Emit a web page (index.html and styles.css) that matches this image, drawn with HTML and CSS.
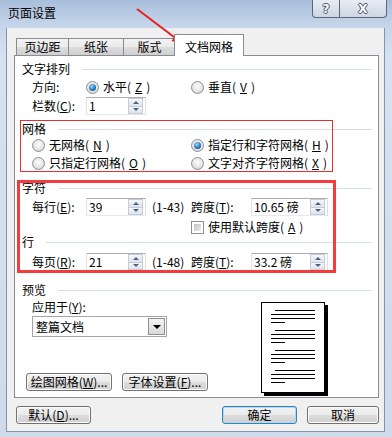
FILE: index.html
```html
<!DOCTYPE html>
<html lang="zh-CN">
<head>
  <meta charset="UTF-8" />
  <title>页面设置</title>
  <link rel="stylesheet" href="styles.css">
</head>
<body>
  <div class="window">
    <div class="titlebar">
      <span class="title">页面设置</span>
      <div class="caption">
        <span class="cap-btn help">?</span>
        <span class="cap-btn close">X</span>
      </div>
    </div>
    <div class="client">
      <div class="tabs">
        <div class="tab t1">页边距</div>
        <div class="tab t2">纸张</div>
        <div class="tab t3">版式</div>
        <div class="tab active">文档网格</div>
      </div>
      <div class="pane">
        <div class="heading">文字排列</div>
        <div class="row cols ind mt2">
          <div class="cell"><span class="lbl">方向:</span><span class="opt"><i class="radio on"></i>水平(<u>Z</u>)</span></div>
          <div class="cell"><span class="opt"><i class="radio"></i>垂直(<u>V</u>)</span></div>
        </div>
        <div class="row ind mt1">
          <span class="lbl">栏数(<u>C</u>):</span>
          <span class="spin"><span class="spin-val">1</span><span class="spin-btns"><i class="up"></i><i class="down"></i></span></span>
        </div>

        <div class="heading mt7">网格</div>
        <div class="row cols ind">
          <div class="cell"><span class="opt"><i class="radio"></i>无网格(<u>N</u>)</span></div>
          <div class="cell"><span class="opt"><i class="radio on"></i>指定行和字符网格(<u>H</u>)</span></div>
        </div>
        <div class="row cols ind">
          <div class="cell"><span class="opt"><i class="radio"></i>只指定行网格(<u>O</u>)</span></div>
          <div class="cell"><span class="opt"><i class="radio"></i>文字对齐字符网格(<u>X</u>)</span></div>
        </div>

        <div class="heading mt9">字符</div>
        <div class="row cols ind mt3">
          <div class="cell">
            <span class="lbl">每行(<u>E</u>):</span>
            <span class="spin"><span class="spin-val">39</span><span class="spin-btns"><i class="up"></i><i class="down"></i></span></span>
            <span class="range">(1-43)</span>
          </div>
          <div class="cell">
            <span class="lbl wide">跨度(<u>T</u>):</span>
            <span class="spin long"><span class="spin-val">10.65 磅</span><span class="spin-btns"><i class="up"></i><i class="down"></i></span></span>
          </div>
        </div>
        <div class="row short cols ind mt4">
          <div class="cell"></div>
          <div class="cell"><span class="opt"><i class="check"></i>使用默认跨度(<u>A</u>)</span></div>
        </div>

        <div class="heading mt1">行</div>
        <div class="row cols ind mt4">
          <div class="cell">
            <span class="lbl">每页(<u>R</u>):</span>
            <span class="spin"><span class="spin-val">21</span><span class="spin-btns"><i class="up"></i><i class="down"></i></span></span>
            <span class="range">(1-48)</span>
          </div>
          <div class="cell">
            <span class="lbl wide">跨度(<u>T</u>):</span>
            <span class="spin long"><span class="spin-val">33.2 磅</span><span class="spin-btns"><i class="up"></i><i class="down"></i></span></span>
          </div>
        </div>

        <div class="heading mt12">预览</div>
        <div class="preview">
          <div class="preview-left">
            <div class="apply">应用于(<u>Y</u>):</div>
            <div class="select"><span class="select-val">整篇文档</span><span class="select-btn"></span></div>
            <div class="btn-row">
              <button class="btn w86">绘图网格(<u>W</u>)...</button>
              <button class="btn w86">字体设置(<u>F</u>)...</button>
            </div>
          </div>
          <svg class="page" width="67" height="94" viewBox="0 0 67 94">
            <rect x="3" y="3" width="64" height="91" fill="#000"/>
            <rect x="0.5" y="0.5" width="63" height="90" fill="#fff" stroke="#000"/>
            <g stroke="#000" stroke-width="1">
              <path d="M14 8.5H54M10 12.5H54M10 16.5H54M10 20.5H24"/>
              <path d="M14 28.5H54M10 32.5H54M10 36.5H54M10 40.5H24"/>
              <path d="M14 48.5H54M10 52.5H54M10 56.5H54M10 60.5H24"/>
              <path d="M14 68.5H54M10 72.5H54M10 76.5H54M10 80.5H24"/>
            </g>
          </svg>
        </div>
      </div>
      <div class="footer">
        <button class="btn w75">默认(<u>D</u>)...</button>
        <button class="btn w75 default">确定</button>
        <button class="btn w72">取消</button>
      </div>
    </div>

    <div class="mark box1"></div>
    <div class="mark box2"></div>
    <svg class="arrow" width="200" height="60" viewBox="0 0 200 60">
      <line x1="137" y1="9" x2="176" y2="38.5" stroke="#e81f1f" stroke-width="2"/>
      <polygon points="183,44 171.5,41 177,33.5" fill="#e81f1f"/>
    </svg>
  </div>
</body>
</html>
```

FILE: styles.css
```css
* {
  box-sizing: border-box;
}
body {
  margin: 0;
  font-family: "Noto Sans CJK SC", sans-serif;
  font-size: 12px;
  line-height: 14px;
  color: #000;
}
.window {
  position: relative;
  width: 392px;
  height: 437px;
  overflow: hidden;
  background: linear-gradient(180deg, #a9bedb 0, #c6d6ea 26px, #d6e2f0 60px, #cfdbea 100%);
}
.titlebar {
  height: 28px;
  display: flex;
  align-items: flex-start;
  padding-left: 8px;
}
.title {
  margin-top: 6px;
}
.caption {
  display: flex;
  margin-left: auto;
  margin-right: 5px;
}
.cap-btn {
  height: 18px;
  display: flex;
  align-items: center;
  justify-content: center;
  border: 1px solid #5b6779;
  border-top: none;
  background: linear-gradient(#e7edf5, #cdd6e2);
  color: #fff;
  font-family: "DejaVu Sans", sans-serif;
  font-weight: bold;
  font-size: 12px;
  text-shadow: -1px 0 #4a5466, 1px 0 #4a5466, 0 -1px #4a5466, 0 1px #4a5466;
}
.help {
  width: 28px;
  border-radius: 0 0 0 4px;
}
.close {
  width: 47px;
  border-left: none;
  border-radius: 0 0 4px 0;
}

.client {
  margin-left: 6px;
  width: 379px;
  height: 404px;
  border: 1px solid #8394ab;
  border-top: none;
  background: #f0f0f0;
  padding-top: 6px;
}
.tabs {
  display: flex;
  align-items: flex-end;
  height: 21px;
  margin-left: 9px;
}
.tab {
  height: 17px;
  margin-right: -1px;
  display: flex;
  align-items: center;
  justify-content: center;
  border: 1px solid #898c95;
  border-bottom: none;
  background: linear-gradient(#f3f3f3, #ebebeb 50%, #dddddd 51%, #cfcfcf);
}
.t1 { width: 53px; }
.t2 { width: 56px; }
.t3 { width: 53px; }
.tab.active {
  position: relative;
  z-index: 1;
  width: 70px;
  height: 22px;
  margin-left: -1px;
  margin-bottom: -1px;
  background: #fff;
  padding-top: 2px;
}
.pane {
  margin-left: 7px;
  width: 365px;
  height: 343px;
  border: 1px solid #898c95;
  background: #fff;
  padding: 6px 6px 0 7px;
}

.heading {
  display: flex;
  align-items: center;
  height: 14px;
  gap: 12px;
}
.heading::after {
  content: "";
  flex: 1;
  border-top: 1px solid #d5dfe5;
}
.row {
  display: flex;
  align-items: center;
  height: 18px;
}
.row.short { height: 14px; }
.ind { padding-left: 10px; }
.cols {
  display: grid;
  grid-template-columns: 159px 1fr;
}
.cell {
  display: flex;
  align-items: center;
}
.mt1 { margin-top: 1px; }
.mt2 { margin-top: 2px; }
.mt3 { margin-top: 3px; }
.mt4 { margin-top: 4px; }
.mt7 { margin-top: 7px; }
.mt9 { margin-top: 9px; }
.mt12 { margin-top: 12px; }

.lbl {
  width: 54px;
  flex: none;
}
.lbl.wide { width: 60px; }
.range { margin-left: 6px; }
.opt {
  display: flex;
  align-items: center;
  gap: 4px;
  white-space: nowrap;
}
.radio {
  position: relative;
  flex: none;
  width: 13px;
  height: 13px;
  border-radius: 50%;
  border: 1px solid #8e8f8f;
  background: radial-gradient(circle at 50% 40%, #fdfdfd, #e6e6e6 55%, #c8c8c8);
}
.radio.on::after {
  content: "";
  position: absolute;
  left: 2px;
  top: 2px;
  width: 7px;
  height: 7px;
  border-radius: 50%;
  background: radial-gradient(circle at 40% 35%, #9adcff, #2878c0 55%, #0d3f70);
}
.check {
  flex: none;
  width: 13px;
  height: 13px;
  border: 1px solid #8e8f8f;
  background: #fff;
  padding: 2px;
}
.check::after {
  content: "";
  display: block;
  width: 100%;
  height: 100%;
  background: linear-gradient(135deg, #c2c2c2, #ececec);
}

.spin {
  display: flex;
  width: 60px;
  height: 18px;
  border: 1px solid #abadb3;
  border-color: #abadb3 #dbdfe6 #e3e9ef #e2e3ea;
  background: #fff;
}
.spin.long { width: 77px; }
.spin-val {
  flex: 1;
  padding-left: 2px;
  line-height: 16px;
  white-space: nowrap;
}
.spin-btns {
  display: flex;
  flex-direction: column;
  width: 15px;
  margin: 0 2px 0 0;
}
.spin-btns i {
  flex: 1;
  display: flex;
  align-items: center;
  justify-content: center;
  background: linear-gradient(#f4f6f9, #dfe4eb);
  border: 1px solid #c5ccd6;
}
.spin-btns i + i { border-top: none; }
.spin-btns .up::before {
  content: "";
  border-left: 3px solid transparent;
  border-right: 3px solid transparent;
  border-bottom: 3px solid #4c5f85;
}
.spin-btns .down::before {
  content: "";
  border-left: 3px solid transparent;
  border-right: 3px solid transparent;
  border-top: 3px solid #4c5f85;
}

.preview {
  display: flex;
}
.preview-left {
  width: 239px;
  padding-left: 4px;
}
.apply {
  margin: 3px 0 0 6px;
}
.select {
  display: flex;
  width: 135px;
  height: 21px;
  margin: 2px 0 0 6px;
  border: 1px solid #a5a5a5;
  background: #fff;
}
.select-val {
  flex: 1;
  padding-left: 3px;
  line-height: 19px;
}
.select-btn {
  width: 17px;
  margin: 1px;
  display: flex;
  align-items: center;
  justify-content: center;
  border: 1px solid #8f8f8f;
  background: linear-gradient(#f4f4f4, #d9d9d9);
}
.select-btn::before {
  content: "";
  border-left: 4px solid transparent;
  border-right: 4px solid transparent;
  border-top: 4px solid #000;
}
.btn-row {
  display: flex;
  gap: 10px;
  margin-top: 36px;
}
.page {
  display: block;
  margin-top: 5px;
}

.btn {
  height: 18px;
  padding: 0;
  display: flex;
  align-items: center;
  justify-content: center;
  font: inherit;
  color: #000;
  white-space: nowrap;
  border: 1px solid #707070;
  border-radius: 3px;
  background: linear-gradient(#f2f2f2, #ebebeb 50%, #dddddd 51%, #cfcfcf);
  box-shadow: inset 0 0 0 1px #fcfcfc;
}
.btn.default {
  border-color: #3c7fb1;
  box-shadow: inset 0 0 0 1px #a8dcf6;
}
.w86 { width: 86px; }
.w75 { width: 75px; }
.w72 { width: 72px; }
.footer {
  display: flex;
  gap: 10px;
  margin-top: 8px;
  padding: 0 5px 0 9px;
}
.footer .btn:first-child {
  margin-right: auto;
}

.mark {
  position: absolute;
}
.box1 {
  left: 20px;
  top: 120px;
  width: 313px;
  height: 52px;
  border: 1px solid #e5302f;
}
.box2 {
  left: 17px;
  top: 180px;
  width: 319px;
  height: 93px;
  border: 3px solid #f53b3b;
}
.arrow {
  position: absolute;
  left: 0;
  top: 0;
}
```
